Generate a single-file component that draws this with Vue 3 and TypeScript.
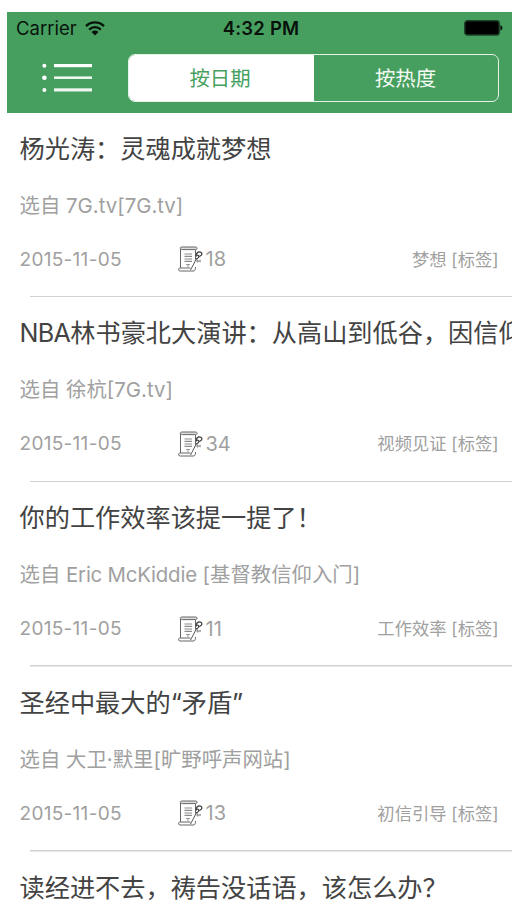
<script setup lang="ts">
import { ref } from 'vue'

interface Article {
  title: string
  source: string
  date: string
  reads: number
  tag: string
}

interface Run {
  text: string
  latin: boolean
}

const tabs: string[] = ['按日期', '按热度']
const activeTab = ref<number>(0)

const articles: Article[] = [
  { title: '杨光涛：灵魂成就梦想', source: '7G.tv[7G.tv]', date: '2015-11-05', reads: 18, tag: '梦想' },
  { title: 'NBA林书豪北大演讲：从高山到低谷，因信仰', source: '徐杭[7G.tv]', date: '2015-11-05', reads: 34, tag: '视频见证' },
  { title: '你的工作效率该提一提了！', source: 'Eric McKiddie [基督教信仰入门]', date: '2015-11-05', reads: 11, tag: '工作效率' },
  { title: '圣经中最大的“矛盾”', source: '大卫·默里[旷野呼声网站]', date: '2015-11-05', reads: 13, tag: '初信引导' },
]
const nextTitle = '读经进不去，祷告没话语，该怎么办？'

// Splits mixed text so that Latin words can be tracked tighter than Chinese ones.
function runs(text: string): Run[] {
  return (text.match(/[A-Za-z]{2,}(?: [A-Za-z]+)*|[^A-Za-z]+|[A-Za-z]/g) ?? []).map((part) => ({
    text: part,
    latin: /^[A-Za-z]{3,}/.test(part),
  }))
}
</script>

<template>
  <div class="page">
    <main class="screen">
      <header class="header">
        <div class="status">
          <div class="carrier">
            <span>Carrier</span>
            <svg class="wifi" width="20" height="15" viewBox="0 0 20 15">
              <path d="M1 5.1a12.7 12.7 0 0 1 18 0M4.2 8.6a8.2 8.2 0 0 1 11.6 0" fill="none" stroke="#07120b" stroke-width="2.3" />
              <path d="M6.500 11a5 5 0 0 1 7 0L10 14.500z" fill="#07120b" />
            </svg>
          </div>
          <span class="time">4:32 PM</span>
          <svg class="battery" width="40" height="16" viewBox="0 0 40 16">
            <rect x=".8" y=".8" width="34.4" height="14.2" rx="2.6" fill="#000" stroke="#1d4029" stroke-width="1.4" />
            <path d="M36.4 5.3c2.700.5 2.700 4.800 0 5.300z" fill="#07120b" />
          </svg>
        </div>
        <nav class="nav">
          <svg class="menu" width="50" height="30" viewBox="0 0 50 30">
            <g fill="#fff">
              <circle cx="2.4" cy="2.7" r="2" /><circle cx="2.4" cy="14.7" r="2.3" /><circle cx="2.4" cy="27" r="2" />
              <rect x="12" y="1" width="38" height="3.2" /><rect x="12" y="13.4" width="38" height="2.6" opacity=".9" /><rect x="12" y="25.3" width="38" height="3.2" opacity=".9" />
            </g>
          </svg>
          <div class="segments">
            <button
              v-for="(tab, i) in tabs"
              :key="tab"
              class="segment"
              :class="{ active: i === activeTab }"
              @click="activeTab = i"
            >{{ tab }}</button>
          </div>
        </nav>
      </header>
      <section class="list">
        <article v-for="item in articles" :key="item.title" class="item">
          <h2 class="title"><span v-for="(run, i) in runs(item.title)" :key="i" :class="{ latin: run.latin }">{{ run.text }}</span></h2>
          <p class="source">选自 <span v-for="(run, i) in runs(item.source)" :key="i" :class="{ latin: run.latin }">{{ run.text }}</span></p>
          <div class="meta">
            <span class="date">{{ item.date }}</span>
            <svg class="scroll" width="25" height="26" viewBox="0 0 25 26" fill="none" stroke="#666" stroke-width="1">
              <path d="M3.500 1h14c2.200 0 2.200 2.600 0 2.600H4.500C2 3.600 1.500 1.500 3.500 1z" fill="#ddd" />
              <path d="M2.500 3v19M17.500 4v9M1.500 22h11M1.500 22c-1.300 1-1.300 3 .7 3H16c1.200-.5 1.500-2 1.500-4" />
              <path d="M6.500 8h7.500M6.500 10.300h7.500M6.500 13h7.500M6.500 15.300h7.500" stroke="#8a8a8a" stroke-width="1.200" />
              <path d="M8 18.500h4M10 18.500v3" stroke="#999" />
              <path d="M12.500 24c1.500-3 4-7 5.500-11" stroke="#555" />
              <path d="M18.500 10.500c-.8-2 .3-4.200 2.300-4.500 1.800-.3 3.400.8 3 2.300-.3 1.400-1.600.9-2.300 2.300M18.300 9.500c1.700-.8 3.200.4 2.200 2-.7 1-2 .8-2.600 2" stroke-width="1.300" stroke="#444" />
              <path d="M18.600 15c.3-1 1.600-1 1.800 0s-1.200 1.500-1.800 0zM22 13.800v2.400" />
            </svg>
            <span class="reads">{{ item.reads }}</span>
            <span class="tag">{{ item.tag }} [标签]</span>
          </div>
        </article>
        <article class="item last">
          <h2 class="title">{{ nextTitle }}</h2>
        </article>
      </section>
    </main>
  </div>
</template>

<style>
body {
  margin: 0;
  background: #fff;
}
</style>

<style scoped>
.page {
  box-sizing: border-box;
  height: 920px;
  padding: 12px 6.5px 0;
  overflow: hidden;
  background: #fff;
  font-family: Inter, "Noto Sans CJK SC", sans-serif;
}
.screen {
  height: 908px;
  overflow: hidden;
}
.header {
  height: 100.5px;
  background: #479f5f;
}
.status {
  display: grid;
  grid-template-columns: 1fr auto 1fr;
  align-items: center;
  height: 32px;
  padding: 0 8px 0 9.5px;
  color: #07120b;
}
.carrier {
  display: flex;
  align-items: center;
  gap: 8px;
  font-size: 18.5px;
}
.time {
  padding-left: 2.5px;
  font-size: 18.5px;
  font-weight: 600;
  letter-spacing: 0.2px;
}
.battery {
  justify-self: end;
}
.nav {
  display: flex;
  align-items: center;
  justify-content: space-between;
  height: 48px;
  padding: 9.5px 13px 0 35.5px;
}
.segments {
  box-sizing: border-box;
  display: grid;
  grid-template-columns: 185px 1fr;
  width: 371px;
  height: 48px;
  border: 1.5px solid #e4f2e7;
  border-radius: 7px;
  overflow: hidden;
}
.segment {
  padding: 2px 0 0;
  border: 0;
  background: transparent;
  color: #f4faf5;
  font: 20.4px/44px Inter, "Noto Sans CJK SC", sans-serif;
}
.segment.active {
  padding-right: 2px;
  background: #fff;
  color: #479f5f;
}
.item {
  box-sizing: border-box;
  display: flex;
  flex-direction: column;
  height: 184.8px;
  padding: 17px 13px 0;
  background: linear-gradient(#d2d2d2, #d2d2d2) 23.5px 100% / 100% 1.5px no-repeat;
}
.item.last {
  background: none;
}
.title {
  margin: 0;
  font-size: 25.2px;
  font-weight: 400;
  line-height: 38px;
  white-space: nowrap;
  color: #434343;
}
.title .latin {
  letter-spacing: -0.7px;
}
.source {
  margin: 22px 0 0;
  font-size: 20.4px;
  line-height: 32px;
  white-space: nowrap;
  color: #a0a0a0;
}
.source .latin {
  letter-spacing: -0.2px;
}
.meta {
  display: flex;
  align-items: center;
  height: 30px;
  margin-top: 22.5px;
  color: #a0a0a0;
}
.date {
  width: 158.5px;
  font-size: 19px;
  letter-spacing: 0.3px;
}
.reads {
  margin-left: 2.5px;
  font-size: 20px;
}
.tag {
  margin-left: auto;
  padding-bottom: 2px;
  font-size: 17.3px;
}
</style>
